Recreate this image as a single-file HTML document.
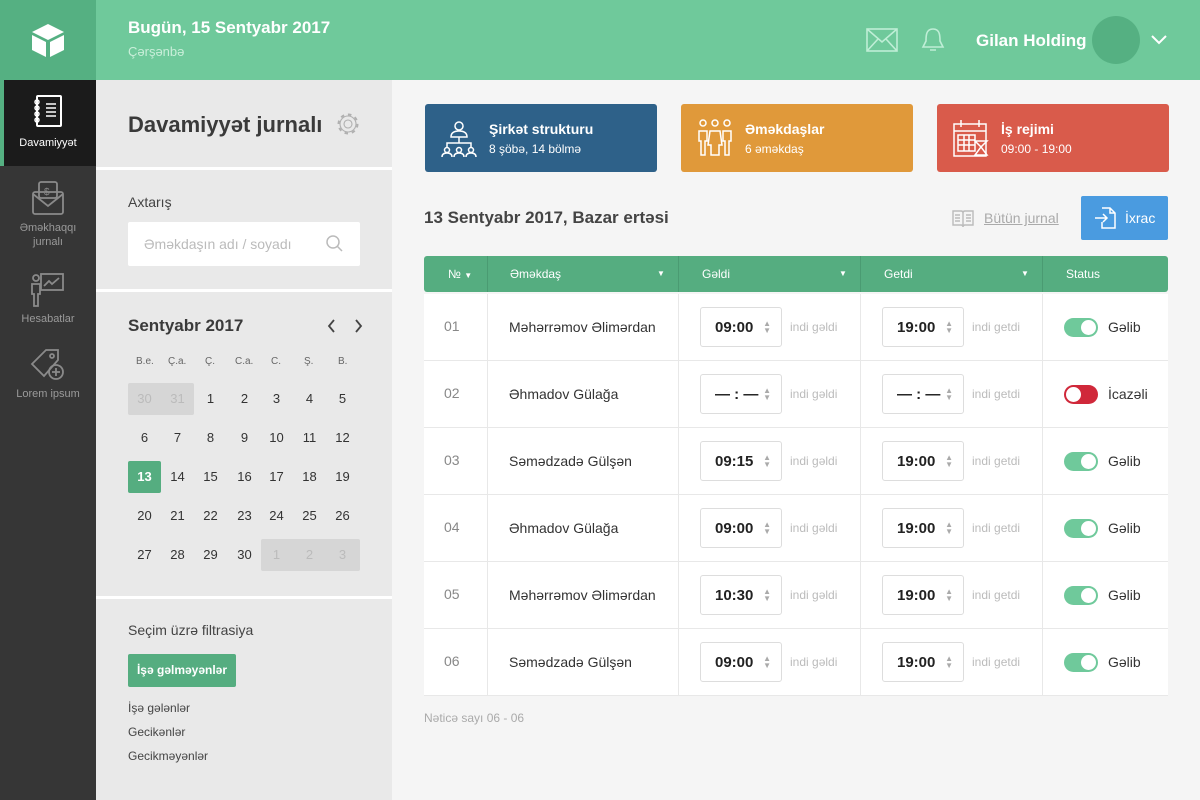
<!DOCTYPE html>
<html><head><meta charset="utf-8"><style>
*{margin:0;padding:0;box-sizing:border-box}
body{width:1200px;height:800px;overflow:hidden;font-family:"Liberation Sans",sans-serif;background:#f5f5f5;position:relative;color:#333}
.abs{position:absolute}
#sb{left:0;top:0;width:96px;height:800px;background:#363636}
#logo{left:0;top:0;width:96px;height:80px;background:#55b082}
#hdr{left:96px;top:0;width:1104px;height:80px;background:#6fc99b;color:#fff}
#lp{left:96px;top:80px;width:296px;height:720px;background:#e9e9e9}
.sep{position:absolute;left:0;width:296px;height:3px;background:#fff}
.nav{position:absolute;left:0;width:96px;text-align:center;font-size:11px;color:#9a9a9a;line-height:14px}
.card{position:absolute;top:104px;width:232px;height:68px;border-radius:3px;color:#fff}
.card b{position:absolute;left:64px;top:17px;font-size:14px}
.card span{position:absolute;left:64px;top:38px;font-size:12px}
.card svg{position:absolute;left:16px;top:15px}
.cal{position:absolute;left:128px;top:380px;width:232px}
.cal div{position:absolute;width:33px;height:32px;line-height:32px;text-align:center;font-size:13px;color:#333}
.th{position:absolute;top:256px;height:36px;line-height:36px;font-size:12px;color:#fff}
.row{position:absolute;left:424px;width:744px;height:67px;background:#fff;border-bottom:1px solid #e8e8e8}
.cell{position:absolute;top:0;height:67px;line-height:67px;font-size:14px}
.vl{position:absolute;top:0;width:1px;height:67px;background:#e8e8e8}
.tb{position:absolute;top:13px;width:82px;height:40px;border:1px solid #ddd;border-radius:3px;font-size:15px;font-weight:bold;line-height:40px;padding-left:14px;color:#222}
.tb i{position:absolute;right:10px;top:0;font-style:normal;font-weight:normal;font-size:8px;color:#aaa;line-height:7px;padding-top:12px}
.hint{position:absolute;top:0;line-height:67px;font-size:12px;color:#bbb}
.tg{position:absolute;left:1064px;top:24px;width:34px;height:19px;border-radius:10px;background:#6fc99b}
.tg:after{content:"";position:absolute;right:2px;top:2px;width:15px;height:15px;border-radius:50%;background:#fff}
.tg.r{background:#d0283a}.tg.r:after{left:2px;right:auto}
</style></head><body>
<div id="sb" class="abs"></div>
<div id="logo" class="abs"><svg width="96" height="80" viewBox="0 0 96 80"><path d="M48 24 L64 32 L48 40 L32 32Z" fill="#fff"/><path d="M32 35 L46 42 L46 57 L32 50Z" fill="#fff"/><path d="M64 35 L50 42 L50 57 L64 50Z" fill="#fff"/></svg></div>
<div class="abs" style="left:0;top:80px;width:96px;height:86px;background:#1b1b1b;border-left:4px solid #55b082"></div>
<svg class="abs" style="left:32px;top:94px" width="32" height="36"><rect x="5" y="2" width="24" height="30" rx="1" fill="none" stroke="#fff" stroke-width="2"/><g stroke="#fff" stroke-width="1.5" fill="none"><circle cx="5" cy="8" r="2"/><circle cx="5" cy="14" r="2"/><circle cx="5" cy="20" r="2"/><circle cx="5" cy="26" r="2"/><path d="M14 10h10M14 14h10M14 18h10M14 22h10"/></g></svg>
<div class="nav" style="top:136px;color:#fff">Davamiyyət</div>
<svg class="abs" style="left:32px;top:180px" width="34" height="36"><g fill="none" stroke="#8a8a8a" stroke-width="1.8"><rect x="1" y="12" width="30" height="22" rx="2"/><path d="M1 14 L16 26 L31 14"/><rect x="7" y="2" width="18" height="16" rx="2"/><text x="12" y="15" font-size="10" fill="#8a8a8a" stroke="none">$</text></g></svg>
<div class="nav" style="top:221px">Əməkhaqqı<br>jurnalı</div>
<svg class="abs" style="left:30px;top:272px" width="36" height="36"><g fill="none" stroke="#8a8a8a" stroke-width="1.8"><rect x="11" y="2" width="22" height="16"/><path d="M14 14 l5-5 3 3 7-6"/><circle cx="6" cy="6" r="3"/><path d="M2 12h8v10h-2v12h-4v-12h-2z"/></g></svg>
<div class="nav" style="top:312px">Hesabatlar</div>
<svg class="abs" style="left:30px;top:346px" width="36" height="36"><g fill="none" stroke="#8a8a8a" stroke-width="1.8"><path d="M2 18 L16 4 L28 4 L28 14 L14 30Z"/><circle cx="22" cy="10" r="2"/><circle cx="26" cy="26" r="7"/><path d="M26 22v8M22 26h8"/></g></svg>
<div class="nav" style="top:387px">Lorem ipsum</div>

<div id="hdr" class="abs">
<div class="abs" style="left:32px;top:18px;font-size:17px;font-weight:600">Bugün, 15 Sentyabr 2017</div>
<div class="abs" style="left:32px;top:44px;font-size:13px;color:#c9eed9">Çərşənbə</div>
<svg class="abs" style="left:770px;top:28px" width="32" height="24"><rect x="1" y="1" width="30" height="22" fill="none" stroke="#bfeed6" stroke-width="1.6"/><path d="M1 1 L16 14 L31 1 M1 23 L12 11 M31 23 L20 11" fill="none" stroke="#bfeed6" stroke-width="1.6"/></svg>
<svg class="abs" style="left:824px;top:26px" width="26" height="28"><path d="M13 3 C6 3 6 10 6 15 L3 21 H23 L20 15 C20 10 20 3 13 3Z M10 24 H16" fill="none" stroke="#bfeed6" stroke-width="1.6"/></svg>
<div class="abs" style="left:880px;top:31px;font-size:17px;font-weight:bold">Gilan Holding</div>
<div class="abs" style="left:996px;top:16px;width:48px;height:48px;border-radius:50%;background:#55b082"></div>
<svg class="abs" style="left:1054px;top:34px" width="18" height="12"><path d="M2 2 L9 9 L16 2" fill="none" stroke="#fff" stroke-width="2"/></svg>
</div>

<div id="lp" class="abs">
<div class="abs" style="left:32px;top:32px;font-size:22px;font-weight:bold;color:#3a3a3a">Davamiyyət jurnalı</div>
<svg class="abs" style="left:240px;top:32px" width="24" height="24"><circle cx="12" cy="12" r="4" fill="none" stroke="#b0b0b0" stroke-width="1.1"/><circle cx="12" cy="12" r="9.5" fill="none" stroke="#b0b0b0" stroke-width="2" stroke-dasharray="3.5 3.9"/><circle cx="12" cy="12" r="8" fill="none" stroke="#b0b0b0" stroke-width="1.1"/></svg>
<div class="sep" style="top:87px"></div>
<div class="abs" style="left:32px;top:114px;font-size:14px;color:#444">Axtarış</div>
<div class="abs" style="left:32px;top:142px;width:232px;height:44px;background:#fff;border-radius:2px;font-size:14px;color:#bbb;line-height:44px;padding-left:16px">Əməkdaşın adı / soyadı
<svg class="abs" style="left:198px;top:13px" width="18" height="18"><circle cx="7" cy="7" r="6" fill="none" stroke="#bbb" stroke-width="1.5"/><path d="M11.5 11.5 L16 16" stroke="#bbb" stroke-width="1.5"/></svg></div>
<div class="sep" style="top:209px"></div>
<div class="abs" style="left:32px;top:236px;font-size:17px;font-weight:bold;color:#3a3a3a">Sentyabr 2017</div>
<svg class="abs" style="left:230px;top:238px" width="40" height="16"><path d="M8 2 L3 8 L8 14 M30 2 L35 8 L30 14" fill="none" stroke="#444" stroke-width="1.8"/></svg>
<div class="sep" style="top:516px"></div>
<div class="abs" style="left:32px;top:542px;font-size:14px;color:#444">Seçim üzrə filtrasiya</div>
<div class="abs" style="left:32px;top:574px;width:108px;height:33px;background:#55ad80;border-radius:2px;color:#fff;font-size:12px;font-weight:bold;line-height:33px;text-align:center">İşə gəlməyənlər</div>
<div class="abs" style="left:32px;top:616px;font-size:12px;color:#444;line-height:24px">İşə gələnlər<br>Gecikənlər<br>Gecikməyənlər</div>
</div>

<div class="abs" style="left:128px;top:356px;width:232px;font-size:10px;color:#666">
<span class="abs" style="left:8px">B.e.</span><span class="abs" style="left:40px">Ç.a.</span><span class="abs" style="left:77px">Ç.</span><span class="abs" style="left:107px">C.a.</span><span class="abs" style="left:143px">C.</span><span class="abs" style="left:176px">Ş.</span><span class="abs" style="left:210px">B.</span></div>
<div class="abs" style="left:128px;top:383px;width:66px;height:32px;background:#d6d6d6;border-radius:2px"></div>
<div class="abs" style="left:261px;top:539px;width:99px;height:32px;background:#d6d6d6;border-radius:2px"></div>
<div class="abs" style="left:128px;top:461px;width:33px;height:32px;background:#55ad80;border-radius:2px"></div>
<div class="cal" id="cal"></div>

<div class="card" style="left:425px;background:#2e6189"><svg width="36" height="40"><g fill="none" stroke="#fff" stroke-width="1.5"><circle cx="18" cy="7" r="4"/><path d="M10 18 Q10 12 18 12 Q26 12 26 18 Z M18 18 V24 M6 28 V24 H30 V28"/><circle cx="6" cy="31" r="2.5"/><circle cx="18" cy="31" r="2.5"/><circle cx="30" cy="31" r="2.5"/><path d="M1 38 Q1 34 6 34 Q11 34 11 38 M13 38 Q13 34 18 34 Q23 34 23 38 M25 38 Q25 34 30 34 Q35 34 35 38"/></g></svg><b>Şirkət strukturu</b><span>8 şöbə, 14 bölmə</span></div>
<div class="card" style="left:681px;background:#e0993a"><svg width="36" height="40"><g fill="none" stroke="#fff" stroke-width="1.5"><circle cx="6" cy="4" r="3"/><circle cx="18" cy="4" r="3"/><circle cx="30" cy="4" r="3"/><path d="M2 12 h8 v10 h-2 v14 h-4 v-14 h-2z M13 12 h10 l2 14 h-3 v10 h-8 v-10 h-3z M26 12 h8 v10 h-2 v14 h-4 v-14 h-2z"/></g></svg><b>Əməkdaşlar</b><span>6 əməkdaş</span></div>
<div class="card" style="left:937px;background:#d95b4b"><svg width="36" height="40"><g fill="none" stroke="#fff" stroke-width="1.5"><rect x="1" y="5" width="32" height="32"/><path d="M1 12 H33 M8 1 V8 M26 1 V8 M5 16 H22 V32 H5Z M5 21 H22 M5 26 H22 M11 16 V32 M16 16 V32 M22 22 L28 28 L22 36 H34 L28 28 L34 22Z"/></g></svg><b>İş rejimi</b><span>09:00 - 19:00</span></div>

<div class="abs" style="left:424px;top:208px;font-size:17px;font-weight:bold;color:#444">13 Sentyabr 2017, Bazar ertəsi</div>
<svg class="abs" style="left:951px;top:208px" width="24" height="20"><g fill="none" stroke="#bbb" stroke-width="1.4"><path d="M2 3 H10 Q12 3 12 5 V19 Q12 17 10 17 H2Z M22 3 H14 Q12 3 12 5 V19 Q12 17 14 17 H22Z M4 7h5M4 10h5M15 7h5M15 10h5M4 13h5M15 13h5"/></g></svg>
<div class="abs" style="left:984px;top:210px;font-size:14px;color:#aaa;text-decoration:underline">Bütün jurnal</div>
<div class="abs" style="left:1081px;top:196px;width:87px;height:44px;background:#4a9be0;border-radius:2px;color:#fff;font-size:14px;line-height:44px;padding-left:44px">İxrac
<svg class="abs" style="left:12px;top:10px" width="24" height="24"><path d="M9 2 H17 L22 7 V22 H9 V16 M17 2 V7 H22 M2 12 H14 M10 8 L14 12 L10 16" fill="none" stroke="#fff" stroke-width="1.5"/></svg></div>

<div class="abs" style="left:424px;top:256px;width:744px;height:36px;background:#55ad80;border-radius:3px"></div>
<div class="th" style="left:448px">№ <span style="font-size:8px">▼</span></div>
<div class="th" style="left:510px">Əməkdaş</div><div class="th" style="left:657px;font-size:8px">▼</div>
<div class="th" style="left:702px">Gəldi</div><div class="th" style="left:839px;font-size:8px">▼</div>
<div class="th" style="left:884px">Getdi</div><div class="th" style="left:1021px;font-size:8px">▼</div>
<div class="th" style="left:1066px">Status</div>
<div class="abs" style="left:487px;top:256px;width:1px;height:36px;background:#4a9b72"></div>
<div class="abs" style="left:678px;top:256px;width:1px;height:36px;background:#4a9b72"></div>
<div class="abs" style="left:860px;top:256px;width:1px;height:36px;background:#4a9b72"></div>
<div class="abs" style="left:1042px;top:256px;width:1px;height:36px;background:#4a9b72"></div>
<div id="rows"></div>
<div class="abs" style="left:424px;top:711px;font-size:12px;color:#aaa">Nəticə sayı 06 - 06</div>

<script>
var c=document.getElementById('cal'),h='';
var w=[[30,31,1,2,3,4,5],[6,7,8,9,10,11,12],[13,14,15,16,17,18,19],[20,21,22,23,24,25,26],[27,28,29,30,1,2,3]];
var xs=[0,33,66,100,132,165,198];
w.forEach(function(r,i){r.forEach(function(d,j){var col='#333';if((i==0&&j<2)||(i==4&&j>3))col='#bbb';if(i==2&&j==0)col='#fff;font-weight:bold';h+='<div style="left:'+xs[j]+'px;top:'+(i*39+3)+'px;color:'+col+'">'+d+'</div>';});});
c.innerHTML=h;
var R=[["01","Məhərrəmov Əlimərdan","09:00","19:00",0],["02","Əhmadov Gülağa","— : —","— : —",1],["03","Səmədzadə Gülşən","09:15","19:00",0],["04","Əhmadov Gülağa","09:00","19:00",0],["05","Məhərrəmov Əlimərdan","10:30","19:00",0],["06","Səmədzadə Gülşən","09:00","19:00",0]];
var o='';
R.forEach(function(r,i){var t=294+i*67;
o+='<div class="row" style="top:'+t+'px"><div class="vl" style="left:63px"></div><div class="vl" style="left:254px"></div><div class="vl" style="left:436px"></div><div class="vl" style="left:618px"></div>'+
'<div class="cell" style="left:20px;color:#888;font-size:14px;line-height:64px">'+r[0]+'</div>'+
'<div class="cell" style="left:85px;color:#333">'+r[1]+'</div>'+
'<div class="tb" style="left:276px">'+r[2]+'<i>▲<br>▼</i></div><div class="hint" style="left:366px">indi gəldi</div>'+
'<div class="tb" style="left:458px">'+r[3]+'<i>▲<br>▼</i></div><div class="hint" style="left:548px">indi getdi</div>'+
'<div class="tg'+(r[4]?' r':'')+'" style="left:640px"></div><div class="cell" style="left:684px">'+(r[4]?'İcazəli':'Gəlib')+'</div></div>';});
document.getElementById('rows').innerHTML=o;
</script>
</body></html>
